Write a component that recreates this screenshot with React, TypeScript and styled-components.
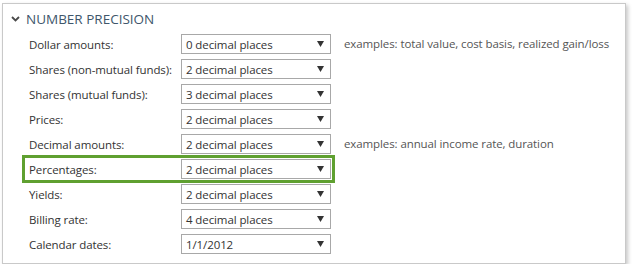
import React from "react";
import styled, { createGlobalStyle } from "styled-components";

const GlobalStyle = createGlobalStyle`
    body {
        margin: 0;
        background: #ffffff;
        font-family: "Open Sans", "Liberation Sans", sans-serif;
    }
`;

const Panel = styled.div`
    box-sizing: border-box;
    margin: 3px 0 0 2px;
    width: 624px;
    height: 261px;
    background: #ffffff;
    border: 1px solid #c9c9c9;
    box-shadow: 2px 2px 4px rgba(0, 0, 0, 0.22);
`;

const Header = styled.div`
    display: flex;
    align-items: center;
    height: 30px;
    padding-left: 8px;
`;

const Title = styled.div`
    margin-left: 6px;
    font-size: 13.5px;
    color: #40566b;
    text-transform: uppercase;
`;

const Rows = styled.div`
    display: flex;
    flex-direction: column;
    padding-left: 19px;
`;

const RowLine = styled.div`
    display: flex;
    align-items: flex-start;
    height: 25px;
`;

const Field = styled.div<{ $highlight?: boolean }>`
    box-sizing: border-box;
    display: flex;
    align-items: center;
    width: 313px;
    height: 28px;
    margin-top: -4px;
    padding: 1px 1px 1px 4px;
    border: 3px solid ${(p) => (p.$highlight ? "#5fa030" : "transparent")};
`;

const Label = styled.div`
    width: 152px;
    font-size: 11.5px;
    letter-spacing: -0.1px;
    color: #333333;
    white-space: nowrap;
`;

const Select = styled.div`
    box-sizing: border-box;
    display: flex;
    align-items: center;
    justify-content: space-between;
    width: 150px;
    height: 20px;
    padding: 0 6px 0 4px;
    border: 1px solid #a8a8a8;
    font-size: 11.5px;
    letter-spacing: -0.1px;
    color: #333333;
`;

const Example = styled.div`
    margin-left: 9px;
    font-size: 11.5px;
    letter-spacing: -0.1px;
    line-height: 20px;
    color: #555555;
    white-space: nowrap;
`;

const rows = [
    {
        label: "Dollar amounts:",
        value: "0 decimal places",
        example: "examples: total value, cost basis, realized gain/loss",
    },
    { label: "Shares (non-mutual funds):", value: "2 decimal places" },
    { label: "Shares (mutual funds):", value: "3 decimal places" },
    { label: "Prices:", value: "2 decimal places" },
    {
        label: "Decimal amounts:",
        value: "2 decimal places",
        example: "examples: annual income rate, duration",
    },
    { label: "Percentages:", value: "2 decimal places", highlight: true },
    { label: "Yields:", value: "2 decimal places" },
    { label: "Billing rate:", value: "4 decimal places" },
    { label: "Calendar dates:", value: "1/1/2012" },
];

const Chevron = () => (
    <svg width="9" height="6" viewBox="0 0 9 6">
        <polyline
            points="1,1 4.5,4.5 8,1"
            fill="none"
            stroke="#4a4a4a"
            strokeWidth="1.8"
        />
    </svg>
);

const Caret = () => (
    <svg width="7" height="6" viewBox="0 0 7 6">
        <polygon points="0,0 7,0 3.5,6" fill="#333333" />
    </svg>
);

const App: React.FC = () => {
    return (
        <>
            <GlobalStyle />
            <Panel>
                <Header>
                    <Chevron />
                    <Title>Number Precision</Title>
                </Header>
                <Rows>
                    {rows.map((row) => (
                        <RowLine key={row.label}>
                            <Field $highlight={row.highlight}>
                                <Label>{row.label}</Label>
                                <Select>
                                    <span>{row.value}</span>
                                    <Caret />
                                </Select>
                            </Field>
                            {row.example && <Example>{row.example}</Example>}
                        </RowLine>
                    ))}
                </Rows>
            </Panel>
        </>
    );
};

export default App;
